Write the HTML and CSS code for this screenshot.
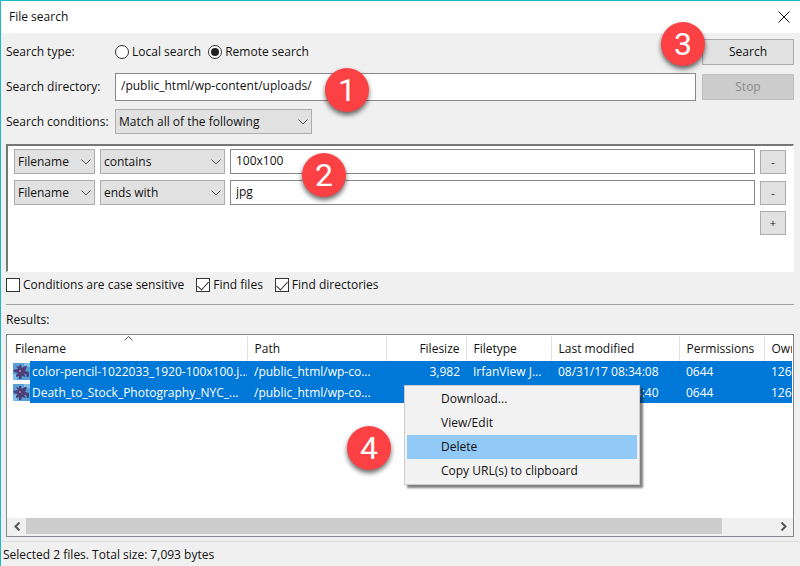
FILE: index.html
```
<!DOCTYPE html>
<html lang="en">

<head>
    <meta charset="UTF-8">
    <title>File search</title>
    <link rel="stylesheet" href="styles.css">
</head>

<body>
    <div class="window">
        <header class="titlebar">
            <h1>File search</h1>
            <button type="button" class="close" aria-label="Close">
                <svg width="12" height="12" viewBox="0 0 12 12"><path d="M.5 .5L11.5 11.5M11.5 .5L.5 11.5" /></svg>
            </button>
        </header>

        <main class="content">
            <form class="search">
                <span id="type-label">Search type:</span>
                <div class="options" role="radiogroup" aria-labelledby="type-label">
                    <label><input type="radio" name="type">Local search</label>
                    <label><input type="radio" name="type" checked>Remote search</label>
                </div>
                <button type="button" class="btn">Search</button>

                <label for="directory">Search directory:</label>
                <input type="text" id="directory" class="text" value="/public_html/wp-content/uploads/">
                <button type="button" class="btn" disabled>Stop</button>

                <label for="match">Search conditions:</label>
                <div class="select match">
                    <select id="match"><option>Match all of the following</option></select>
                    <svg width="10" height="6" viewBox="0 0 10 6"><path d="M.5 .5L5 5L9.5 .5" /></svg>
                </div>
            </form>

            <div class="conditions">
                <div class="condition">
                    <div class="select">
                        <select aria-label="Field"><option>Filename</option></select>
                        <svg width="10" height="6" viewBox="0 0 10 6"><path d="M.5 .5L5 5L9.5 .5" /></svg>
                    </div>
                    <div class="select">
                        <select aria-label="Comparison"><option>contains</option></select>
                        <svg width="10" height="6" viewBox="0 0 10 6"><path d="M.5 .5L5 5L9.5 .5" /></svg>
                    </div>
                    <input type="text" class="text" aria-label="Value" value="100x100">
                    <button type="button" class="btn small">-</button>
                </div>
                <div class="condition">
                    <div class="select">
                        <select aria-label="Field"><option>Filename</option></select>
                        <svg width="10" height="6" viewBox="0 0 10 6"><path d="M.5 .5L5 5L9.5 .5" /></svg>
                    </div>
                    <div class="select">
                        <select aria-label="Comparison"><option>ends with</option></select>
                        <svg width="10" height="6" viewBox="0 0 10 6"><path d="M.5 .5L5 5L9.5 .5" /></svg>
                    </div>
                    <input type="text" class="text" aria-label="Value" value="jpg">
                    <button type="button" class="btn small">-</button>
                </div>
                <button type="button" class="btn small add">+</button>
            </div>

            <div class="options checks">
                <label><input type="checkbox">Conditions are case sensitive</label>
                <label><input type="checkbox" checked>Find files</label>
                <label><input type="checkbox" checked>Find directories</label>
            </div>

            <h2 class="results-title">Results:</h2>
            <div class="results">
                <div class="list">
                    <table>
                        <colgroup>
                            <col class="col-icon">
                            <col class="col-name">
                            <col class="col-path">
                            <col class="col-size">
                            <col class="col-type">
                            <col class="col-date">
                            <col class="col-perm">
                            <col class="col-owner">
                        </colgroup>
                        <thead>
                            <tr>
                                <th colspan="2" class="sorted">Filename
                                    <svg class="sort" width="9" height="5" viewBox="0 0 9 5"><path d="M.5 4.5L4.5 .5L8.5 4.5" /></svg>
                                </th>
                                <th>Path</th>
                                <th class="num">Filesize</th>
                                <th>Filetype</th>
                                <th>Last modified</th>
                                <th>Permissions</th>
                                <th>Owner</th>
                            </tr>
                        </thead>
                        <tbody>
                            <tr>
                                <td class="icon">
                                    <svg width="17" height="17" viewBox="0 0 17 17"><use href="#splat" /></svg>
                                </td>
                                <td class="name">color-pencil-1022033_1920-100x100.j...</td>
                                <td>/public_html/wp-co...</td>
                                <td class="num">3,982</td>
                                <td>IrfanView J...</td>
                                <td>08/31/17 08:34:08</td>
                                <td>0644</td>
                                <td>1260</td>
                            </tr>
                            <tr>
                                <td class="icon">
                                    <svg width="17" height="17" viewBox="0 0 17 17"><use href="#splat" /></svg>
                                </td>
                                <td class="name">Death_to_Stock_Photography_NYC_...</td>
                                <td>/public_html/wp-co...</td>
                                <td class="num">3,111</td>
                                <td>IrfanView J...</td>
                                <td>08/31/17 08:34:40</td>
                                <td>0644</td>
                                <td>1260</td>
                            </tr>
                        </tbody>
                    </table>
                </div>
                <div class="scrollbar">
                    <button type="button" aria-label="Scroll left">
                        <svg width="7" height="9" viewBox="0 0 7 9"><path d="M5.5 .5L1.5 4.5L5.5 8.5" /></svg>
                    </button>
                    <div class="track"><div class="thumb"></div></div>
                    <button type="button" aria-label="Scroll right">
                        <svg width="7" height="9" viewBox="0 0 7 9"><path d="M1.5 .5L5.5 4.5L1.5 8.5" /></svg>
                    </button>
                </div>
            </div>
        </main>

        <footer class="status">Selected 2 files. Total size: 7,093 bytes</footer>

        <div class="menu" role="menu">
            <button type="button" role="menuitem">Download...</button>
            <button type="button" role="menuitem">View/Edit</button>
            <button type="button" role="menuitem" class="active">Delete</button>
            <button type="button" role="menuitem">Copy URL(s) to clipboard</button>
        </div>

        <span class="badge badge1">1</span>
        <span class="badge badge2">2</span>
        <span class="badge badge3">3</span>
        <span class="badge badge4">4</span>
    </div>

    <!-- image file icon -->
    <svg class="defs" width="0" height="0">
        <symbol id="splat" viewBox="0 0 17 17">
            <rect width="17" height="17" fill="#5a9fd4" />
            <path d="M0 11h4v6H0zM11 0h6v4h-6z" fill="#83bce4" />
            <path d="M6 2L8 2L9 5L12 3L14 3L13 6L12 8L16 9L16 11L11 11L13 14L9 13L8 16L6 16L6 13L3 14L3 12L5 10L1 9L0 7L5 6L3 3L6 4Z" fill="#4c3f78" />
            <path d="M13 11h3v3h-2z" fill="#3d4a85" />
            <circle cx="7" cy="8" r="1" fill="#b88ab0" />
        </symbol>
    </svg>
</body>

</html>
```
FILE: styles.css
```
* {
    box-sizing: border-box;
    margin: 0;
    padding: 0;
}

body {
    font: 12px/16px "Open Sans", "Noto Sans", sans-serif;
    color: #111;
}

button,
input,
select {
    font: inherit;
    color: inherit;
}

svg {
    fill: none;
    stroke: #555;
}

.defs {
    position: absolute;
    stroke: none;
}

.window {
    position: relative;
    display: flex;
    flex-direction: column;
    min-height: 100vh;
    background-color: #f0f0f0;
    border-top: 1px solid #1bb8c8;
    border-left: 1px solid #1bb8c8;
}

/* title bar */
.titlebar {
    display: flex;
    align-items: center;
    justify-content: space-between;
    height: 32px;
    padding: 0 10px 0 8px;
    background-color: #fff;
}

.titlebar h1 {
    font-size: 12px;
    font-weight: normal;
}

.close {
    display: flex;
    border: 0;
    background: none;
}

.close svg {
    stroke: #111;
}

/* search form */
.content {
    flex: 1;
    display: flex;
    flex-direction: column;
    padding: 6px 6px 4px 5px;
}

.search {
    display: grid;
    grid-template-columns: 103px 1fr 92px;
    grid-template-rows: 26px 28px 25px;
    gap: 8px 6px;
    align-items: center;
    white-space: nowrap;
}

.options {
    display: flex;
    align-items: center;
    gap: 7px;
}

.options label {
    display: flex;
    align-items: center;
    gap: 3px;
}

input[type="radio"],
input[type="checkbox"] {
    appearance: none;
    display: grid;
    place-items: center;
    width: 14px;
    height: 14px;
    border: 1px solid #333;
    background-color: #fff;
}

input[type="radio"] {
    border-radius: 50%;
}

input[type="radio"]:checked::before {
    content: "";
    width: 8px;
    height: 8px;
    border-radius: 50%;
    background-color: #222;
}

input[type="checkbox"]:checked::before {
    content: "";
    width: 5px;
    height: 10px;
    border: solid #333;
    border-width: 0 1px 1px 0;
    transform: translateY(-1px) rotate(42deg);
}

.btn {
    height: 26px;
    border: 1px solid #adadad;
    background-color: #e1e1e1;
}

.btn:disabled {
    color: #8a8a8a;
    background-color: #ccc;
    border-color: #bfbfbf;
}

.text {
    width: 100%;
    height: 28px;
    padding: 0 5px 3px;
    border: 1px solid #888;
    background-color: #fff;
}

.select {
    display: grid;
    align-items: center;
}

.select select,
.select svg {
    grid-area: 1 / 1;
}

.select select {
    appearance: none;
    width: 100%;
    height: 25px;
    padding: 0 3px;
    border: 1px solid #adadad;
    border-radius: 0;
    background-color: #e1e1e1;
}

.select svg {
    justify-self: end;
    margin-right: 4px;
    pointer-events: none;
}

.match {
    width: 197px;
}

/* conditions */
.conditions {
    display: flex;
    flex-direction: column;
    gap: 6px;
    height: 128px;
    margin-top: 10px;
    padding: 3px 7px 3px 6px;
    border: 1px solid #fff;
    border-top: 2px solid #777;
    border-left: 2px solid #777;
    background-color: #fff;
}

.condition {
    display: grid;
    grid-template-columns: 81px 125px 1fr 26px;
    column-gap: 5px;
    align-items: center;
}

.condition .text {
    height: 25px;
}

.small {
    width: 26px;
    height: 24px;
    font-size: 11px;
}

.add {
    align-self: flex-end;
}

.checks {
    gap: 12px;
    height: 16px;
    margin: 5px 0 11px;
}

/* results */
.results-title {
    padding: 7px 0 6px;
    border-top: 1px solid #a0a0a0;
    font-size: 12px;
    font-weight: normal;
}

.results {
    flex: 1;
    display: flex;
    flex-direction: column;
    border: 1px solid #828790;
    background-color: #fff;
}

.list {
    flex: 1;
    overflow: hidden;
    display: grid;
    grid-template-columns: minmax(0, 1fr);
    align-content: start;
    padding-top: 1px;
    clip-path: inset(0 1px 0 0);
}

table {
    table-layout: fixed;
    width: 860px;
    border-collapse: collapse;
}

.col-icon { width: 23px; }
.col-name { width: 217px; }
.col-path { width: 139px; }
.col-size { width: 80px; }
.col-type { width: 85px; }
.col-date { width: 128px; }
.col-perm { width: 85px; }
.col-owner { width: 103px; }

th,
td {
    padding: 0 6px 0 7px;
    font-weight: normal;
    text-align: left;
    white-space: nowrap;
    overflow: hidden;
}

th {
    height: 25px;
    border-right: 1px solid #e2e2e2;
}

.sorted {
    position: relative;
    padding-left: 8px;
}

.sort {
    position: absolute;
    top: 0;
    left: 117px;
}

td {
    height: 21px;
    color: #fff;
    background-color: #0078d7;
}

td.icon {
    padding: 0 0 0 6px;
    background-color: #fff;
}

td.icon svg {
    display: block;
    stroke: none;
}

td.name {
    padding: 0 0 0 2px;
}

th.num,
td.num {
    text-align: right;
}

.scrollbar {
    display: flex;
    height: 18px;
    padding: 0 1px 2px;
    background-color: #f0f0f0;
}

.scrollbar button {
    display: grid;
    place-items: center;
    width: 18px;
    border: 0;
    background: none;
}

.scrollbar svg {
    stroke-width: 2;
}

.track {
    flex: 1;
}

.thumb {
    width: 93%;
    height: 100%;
    background-color: #cdcdcd;
}

.status {
    padding: 5px 2px 3px;
    border-top: 1px solid #dcdcdc;
}

/* context menu */
.menu {
    position: absolute;
    top: 384px;
    left: 403px;
    display: flex;
    flex-direction: column;
    width: 236px;
    padding: 1px 2px;
    border: 1px solid #ccc;
    background-color: #f2f2f2;
    box-shadow: 3px 3px 2px rgba(0, 0, 0, 0.5);
}

.menu button {
    height: 24px;
    padding-left: 34px;
    border: 0;
    background: none;
    text-align: left;
}

.menu .active {
    background-color: #91c9f7;
}

/* step numbers */
.badge {
    position: absolute;
    width: 44px;
    height: 44px;
    border-radius: 50%;
    background-color: #fc4144;
    box-shadow: 0 3px 5px rgba(0, 0, 0, 0.6);
    color: #fff;
    font: 32px/44px Roboto, sans-serif;
    text-align: center;
}

.badge1 {
    top: 67px;
    left: 324px;
}

.badge2 {
    top: 152px;
    left: 301px;
}

.badge3 {
    top: 21px;
    right: 95px;
}

.badge4 {
    top: 425px;
    left: 346px;
}
```
